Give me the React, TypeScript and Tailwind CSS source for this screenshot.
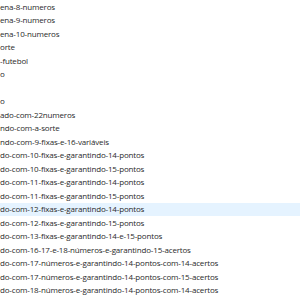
import React from "react";

const rows = [
  "ena-8-numeros",
  "ena-9-numeros",
  "ena-10-numeros",
  "orte",
  "-futebol",
  "o",
  "",
  "o",
  "ado-com-22numeros",
  "ndo-com-a-sorte",
  "ndo-com-9-fixas-e-16-variáveis",
  "do-com-10-fixas-e-garantindo-14-pontos",
  "do-com-10-fixas-e-garantindo-15-pontos",
  "do-com-11-fixas-e-garantindo-14-pontos",
  "do-com-11-fixas-e-garantindo-15-pontos",
  "do-com-12-fixas-e-garantindo-14-pontos",
  "do-com-12-fixas-e-garantindo-15-pontos",
  "do-com-13-fixas-e-garantindo-14-e-15-pontos",
  "do-com-16-17-e-18-números-e-garantindo-15-acertos",
  "do-com-17-números-e-garantindo-14-pontos-com-14-acertos",
  "do-com-17-números-e-garantindo-14-pontos-com-15-acertos",
  "do-com-18-números-e-garantindo-14-pontos-com-14-acertos",
];

export default function App() {
  return (
    <div className="w-[300px] h-[300px] overflow-hidden bg-white font-['Open_Sans',sans-serif] text-[8px] tracking-[-0.17px] text-[#2a2a2a]">
      <div className="flex flex-col">
        {rows.map((r, i) => (
          <div
            key={i}
            className={`h-[13.5px] flex items-center whitespace-nowrap ${
              i === 15 ? "bg-[#e5f3ff]" : ""
            }`}
          >
            {r}
          </div>
        ))}
      </div>
    </div>
  );
}
